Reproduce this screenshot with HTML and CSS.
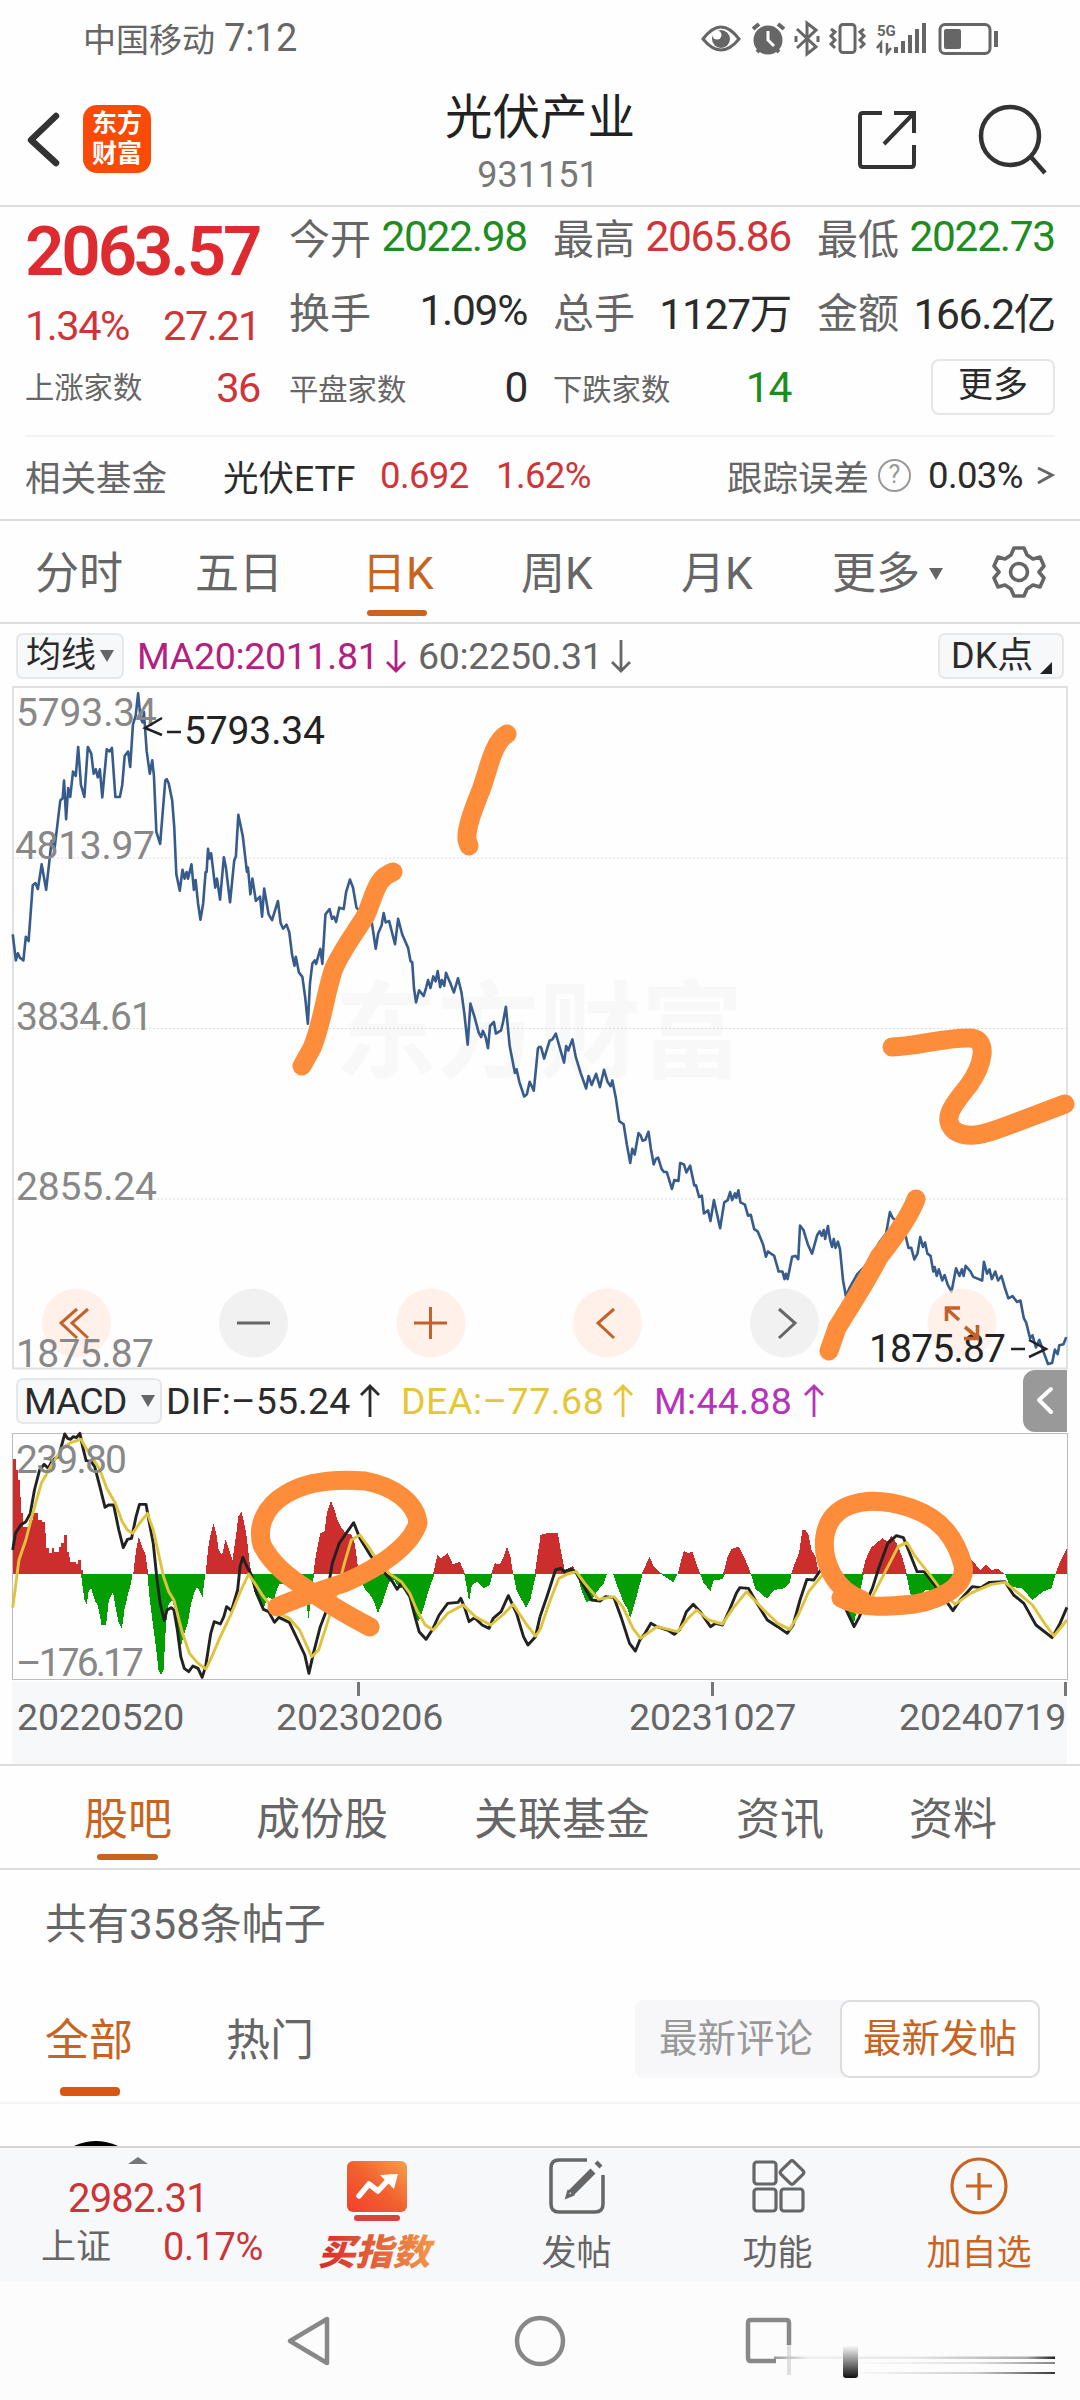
FILE: index.html
```html
<!DOCTYPE html>
<html lang="zh-CN">
<head>
<meta charset="utf-8">
<title>光伏产业 931151</title>
<link rel="stylesheet" href="styles.css">
</head>
<body>
<main class="app">
  <div class="status">
    <span class="carrier">中国移动</span><span class="clock">7:12</span>
    <svg class="status-icons" width="300" height="40" viewBox="700 16 300 40" fill="none" stroke="#666" stroke-width="3">
      <path d="M703 37q18-24 36 0q-18 22-36 0z"/><circle cx="721" cy="37" r="9" fill="#666" stroke="none"/><circle cx="717" cy="33" r="4.5" fill="#fefefe" stroke="none"/>
      <circle cx="768" cy="38" r="14.5" fill="#666" stroke="none"/><path d="M768 29v9l6 6" stroke="#fefefe"/><path d="M753 27l6-5M784 27l-6-5M757 50l4-4M779 50l-4-4" stroke-width="4"/>
      <path d="M797 27l19 18-9 7V21l9 7-19 18M796 34v6M818 34v6"/>
      <rect x="840" y="22.500" width="15" height="28" rx="3"/><path d="M831 27l4 3-4 4 4 4-4 4 4 4M864 27l-4 3 4 4-4 4 4 4-4 4"/>
      <text x="877" y="34" class="tiny">5G</text><path d="M881 51V41l-4 5M887 41v10l4-5" stroke-width="2.500"/><path d="M896 51v-6M903 51v-12M910 51V33M917 51V27M924 51V21" stroke-width="4"/>
      <rect x="940" y="22.500" width="50" height="29" rx="5"/><rect x="944" y="27" width="17" height="20" rx="2" fill="#666" stroke="none"/><path d="M996 29v16" stroke-width="4"/>
    </svg>
  </div>
  <header class="header">
    <svg class="back" width="36" height="60" viewBox="0 0 36 60" fill="none" stroke="#333" stroke-width="6.500" stroke-linecap="round" stroke-linejoin="round"><path d="M30 6L5 30L30 53"/></svg>
    <div class="logo"><span>东方</span><span>财富</span></div>
    <div class="title"><h1>光伏产业</h1><p>931151</p></div>
    <svg class="share" width="60" height="60" viewBox="0 0 60 60" fill="none" stroke="#333" stroke-width="4"><path d="M25 3H6q-3 0-3 3v48q0 3 3 3h48q3 0 3-3V35M37 3h20v20M57 3L27 34"/></svg>
    <svg class="search" width="70" height="70" viewBox="0 0 70 70" fill="none" stroke="#333" stroke-width="4.500"><circle cx="33" cy="34" r="29"/><path d="M54 55l14 16"/></svg>
  </header>
  <section class="quote">
    <div class="quote-main">
      <strong class="price">2063.57</strong>
      <div class="pair red num"><span>1.34%</span><span>27.21</span></div>
      <div class="pair"><span class="small gray">上涨家数</span><span class="num red">36</span></div>
    </div>
    <dl class="stats">
      <div><dt>今开</dt><dd class="green">2022.98</dd></div><div><dt>最高</dt><dd class="red">2065.86</dd></div><div><dt>最低</dt><dd class="green">2022.73</dd></div>
      <div><dt>换手</dt><dd>1.09%</dd></div><div><dt>总手</dt><dd>1127万</dd></div><div><dt>金额</dt><dd>166.2亿</dd></div>
      <div><dt class="small">平盘家数</dt><dd>0</dd></div><div><dt class="small">下跌家数</dt><dd class="green">14</dd></div><div class="more-cell"><button class="more">更多</button></div>
    </dl>
  </section>
  <section class="fund">
    <span class="gray">相关基金</span><span>光伏ETF</span><span class="red num">0.692</span><span class="red num">1.62%</span><span class="gray">跟踪误差</span><span class="help">?</span><span class="num">0.03%</span>
    <svg width="18" height="20" viewBox="0 0 18 20" fill="none" stroke="#666" stroke-width="3"><path d="M1 2l14 7-14 8"/></svg>
  </section>
  <nav class="periods">
    <span>分时</span><span>五日</span><span class="active">日K</span><span>周K</span><span>月K</span><span>更多<i class="caret"></i></span>
    <svg width="54" height="54" viewBox="-27 -27 54 54" fill="none" stroke="#666" stroke-width="3.600" stroke-linejoin="round"><path d="M-5-24H5L8-17L14-13L21-15L25-6L20 0L25 6L21 15L14 13L8 17L5 24H-5L-8 17L-14 13L-21 15L-25 6L-20 0L-25-6L-21-15L-14-13L-8-17Z"/><circle r="8.500"/></svg>
  </nav>
  <div class="indicator ma">
    <span class="chip">均线<i class="caret"></i></span><span class="magenta v-ma">MA20:2011.81</span><svg class="arr magenta"><use href="#down"/></svg><span class="gray v-60">60:2250.31</span><svg class="arr gray"><use href="#down"/></svg><span class="chip dk">DK点<i></i></span>
  </div>
  <svg class="defs" width="0" height="0"><defs>
    <g id="down" fill="none" stroke="currentColor" stroke-width="2.800"><path d="M10 1v31M1 23l9 9 9-9"/></g>
    <g id="up" fill="none" stroke="currentColor" stroke-width="2.800"><path d="M10 33V2M1 11l9-9 9 9"/></g>
    <linearGradient id="warm" x1="0" y1="1" x2="1" y2="0"><stop offset="0" stop-color="#f23f2d"/><stop offset=".5" stop-color="#f2602f"/><stop offset="1" stop-color="#f4a04c"/></linearGradient>
    <linearGradient id="warmh"><stop offset="0" stop-color="#d62a2a"/><stop offset="1" stop-color="#f19a4a"/></linearGradient>
    <linearGradient id="shade" x1="0" y1="0" x2="0" y2="1"><stop offset="0" stop-color="#fff"/><stop offset=".5" stop-color="#888"/><stop offset="1" stop-color="#111"/></linearGradient>
    <linearGradient id="streak"><stop offset="0" stop-color="#999"/><stop offset=".12" stop-color="#f0f0f0"/><stop offset=".5" stop-color="#e6e6e6"/><stop offset=".9" stop-color="#aaa"/><stop offset="1" stop-color="#222"/></linearGradient>
    <linearGradient id="fade"><stop offset="0" stop-color="#888" stop-opacity="0"/><stop offset=".6" stop-color="#888" stop-opacity=".4"/><stop offset="1" stop-color="#333"/></linearGradient>
  </defs></svg>
  <svg class="chart" width="1080" height="690" viewBox="0 680 1080 690">
    <text class="watermark" x="335" y="1069" textLength="408" lengthAdjust="spacingAndGlyphs">东方财富</text>
    <path d="M13 687H1067V1368.500H13Z" fill="none" stroke="#dfe0e0" stroke-width="2"/>
    <path d="M13 858H1067M13 1028.500H1067M13 1199H1067" stroke="#ddd" stroke-dasharray="2 2"/>
    <g class="line price-line">
      <polyline transform="translate(0 680) scale(.34439 .44643)" points="37,570 46,628 52,612 58,622 68,628 75,575 83,585 95,460 103,455 110,468 121,413 134,470 150,360 158,380 175,270 182,265 186,225 192,312 198,242 204,262 212,205 220,215 227,150 235,235 245,262 255,150 265,165 272,210 278,200 284,218 290,200 297,263 310,155 318,160 325,152 335,262 348,262 355,235 362,170 372,160 378,195 386,100 394,80 401,30 408,85 414,95 418,72 426,160 435,210 442,180 447,215 454,340 465,367 480,225 484,222 490,232 500,270 506,330 512,435 522,472 530,425 536,445 542,430 546,445 556,413 563,470 568,448 575,500 582,537 590,500 597,430 600,430 604,378 608,400 613,388 625,465 630,445 639,492 650,397 656,420 668,498 680,405 685,395 692,302 705,350 717,430 720,420 727,480 733,445 743,495 755,485 761,530 767,467 780,525 790,538 807,495 815,545 822,557 832,548 840,565 848,615 855,640 859,620 868,655 878,665 886,710 894,770 900,680 907,635 914,628 918,636 930,602 936,636 945,525 957,513 964,535 970,530 976,542 985,510 998,513 1005,475 1016,447 1025,465 1035,510 1060,530 1080,545 1091,602 1098,568 1108,550 1114,522 1120,543 1130,540 1147,592 1156,535 1168,570 1185,600 1192,630 1197,632 1202,690 1208,722 1217,695 1230,708 1237,690 1243,672 1250,690 1258,664 1265,675 1271,652 1278,688 1283,672 1290,685 1295,656 1308,680 1318,700 1330,668 1340,700 1348,745 1358,817 1366,725 1378,755 1390,790 1397,800 1402,786 1410,800 1417,825 1423,775 1434,766 1440,792 1455,785 1461,765 1469,732 1480,820 1495,880 1500,872 1508,900 1522,933 1530,928 1538,900 1550,920 1557,865 1562,825 1568,820"/>
      <polyline transform="translate(540 680) scale(.34439 .44643)" points="0,820 4,825 12,848 28,808 36,805 46,792 58,825 70,857 76,820 82,830 94,805 104,845 118,880 134,915 141,887 150,907 163,882 174,912 186,873 196,900 205,910 210,897 220,935 230,988 243,995 252,1040 262,1082 268,1050 275,1063 286,1015 292,1020 298,1032 306,1030 315,1012 322,1050 330,1085 337,1072 343,1070 353,1095 360,1102 368,1102 383,1140 390,1120 402,1122 407,1082 418,1085 425,1103 436,1088 448,1132 453,1132 462,1158 470,1155 476,1195 488,1188 495,1212 505,1165 523,1228 535,1170 545,1165 552,1147 558,1165 566,1150 570,1160 576,1143 582,1170 595,1175 604,1200 612,1198 622,1230 632,1235 648,1265 656,1292 662,1280 680,1290 693,1325 704,1325 710,1342 714,1330 719,1342 732,1292 742,1290 750,1297 755,1222 765,1232 778,1265 790,1285 805,1243 812,1235 818,1245 824,1232 828,1252 836,1223 842,1253 848,1270 853,1252 858,1272 865,1258 871,1275 880,1345 888,1380 900,1360 922,1330 925,1328 960,1300 985,1260 1005,1240 1016,1192 1024,1205 1040,1215 1060,1240 1070,1272 1078,1272 1087,1298 1096,1285 1104,1248 1112,1270 1118,1260 1125,1285 1134,1290 1142,1325 1146,1315 1152,1335 1158,1320 1168,1345 1175,1333 1184,1355 1195,1370 1208,1318 1218,1335 1225,1320 1230,1335 1236,1312 1250,1325 1258,1337 1284,1345 1289,1303 1298,1330 1305,1320 1312,1342 1322,1325 1330,1345 1340,1335 1350,1362 1360,1385 1372,1380 1385,1393 1395,1390 1405,1430 1412,1440 1423,1475 1430,1468 1440,1495 1450,1478 1462,1505 1475,1532 1487,1530 1495,1500 1503,1510 1508,1490 1520,1488 1528,1472"/>
    </g>
    <g fill="#ffe9de" fill-opacity=".65"><circle cx="76.500" cy="1323" r="34.500"/><circle cx="431" cy="1323" r="34.500"/><circle cx="607.500" cy="1323" r="34.500"/><circle cx="962" cy="1323" r="34.500"/></g>
    <g fill="#eee" fill-opacity=".8"><circle cx="253.500" cy="1323" r="34.500"/><circle cx="784.500" cy="1323" r="34.500"/></g>
    <g class="axis-label">
      <text x="16" y="726" textLength="141">5793.34</text><text x="15" y="859" textLength="140">4813.97</text><text x="16" y="1030" textLength="137">3834.61</text><text x="16" y="1200" textLength="141">2855.24</text><text x="16" y="1367" textLength="138">1875.87</text>
    </g>
    <g class="peak"><text x="184" y="744" textLength="141">5793.34</text><text x="869" y="1362" textLength="137">1875.87</text><path d="M162 718l-17 10 17 7M167 732h14M1011 1349h14M1029 1340l17 9-17 8" fill="none" stroke="#222" stroke-width="2.500"/></g>
    <g fill="none" stroke="#c2622a" stroke-width="3"><path d="M77 1309L61 1323L77 1338M88 1309L72 1323L88 1338M414 1323H447M430.500 1307V1339M614 1309L598 1323L614 1338"/><path d="M960 1308H946.500V1321M947 1309L959 1320M965 1327L977 1337M964 1338.500H977.500V1325" stroke-width="3.600"/><path d="M237 1323H270M779 1309L795 1323L779 1338" stroke="#666"/></g>
  </svg>
  <div class="indicator macd">
    <span class="chip">MACD<i class="caret"></i></span><span class="v-dif">DIF:–55.24</span><svg class="arr"><use href="#up"/></svg><span class="yellow v-dea">DEA:–77.68</span><svg class="arr yellow"><use href="#up"/></svg><span class="purple v-m">M:44.88</span><svg class="arr purple"><use href="#up"/></svg>
    <span class="drawer"><svg width="18" height="32" viewBox="0 0 18 32" fill="none" stroke="#fff" stroke-width="4" stroke-linecap="round" stroke-linejoin="round"><path d="M15 4L3 15L15 27"/></svg></span>
  </div>
  <svg class="chart" width="1080" height="250" viewBox="0 1432 1080 250">
    <g id="bars" shape-rendering="crispEdges">
      <g transform="translate(0 1370) scale(.34439 .33333)">
        <path fill="#cb2e2c" d="M37 611V268H46V300H52V330H57V380H62V430H68V470H85V450H97V430H110V450H122V457H130V490H135V535H141V550H150V533H157V545H170V530H178V518H185V495H194V545H200V560H204V577H222V583H227V570H234V600H240V611ZM387 611L395 540L403 500L412 530L422 550L430 611ZM597 611L605 530L612 490L620 462L628 490L635 540L645 555L655 508L665 540L675 570L685 500L692 440L701 425L708 455L715 490L725 580L730 611ZM910 611L918 550L930 490L942 485L950 425L961 393L970 415L980 450L992 475L1005 490L1020 492L1030 520L1042 611ZM1258 611L1270 555L1280 565L1300 550L1315 583L1335 575L1350 611ZM1427 611L1437 580L1452 583L1463 560L1472 530L1482 560L1490 611ZM1553 611L1560 560L1568 510V611Z"/>
        <path fill="#049e04" d="M235 611L245 690L252 702L258 660L265 655L275 690L285 710L295 765L308 765L316 690L328 665L335 710L345 760L354 775L362 715L370 680L380 640L385 611ZM428 611L435 690L445 770L455 850L460 900L467 915L475 900L482 760L490 700L500 690L508 720L515 770L525 830L535 790L545 760L555 700L565 665L572 650L580 665L588 680L596 611ZM725 611L740 670L752 690L765 715L778 680L795 690L805 655L812 640L850 650L885 640L890 700L896 745L903 690L912 611ZM1045 611L1058 655L1075 675L1088 700L1097 730L1110 700L1122 660L1130 635L1145 630L1160 655L1175 650L1195 690L1205 740L1215 755L1228 720L1245 660L1262 611ZM1348 611L1355 650L1362 695L1370 645L1385 635L1405 655L1422 645L1430 611ZM1490 611L1500 660L1515 690L1527 713L1540 690L1550 640L1558 611Z"/>
      </g>
      <g transform="translate(540 1370) scale(.34439 .33333)">
        <path fill="#cb2e2c" d="M0 611V495L20 490H52L60 540L72 600L95 588L105 605L115 611ZM296 611L305 590L318 560L330 590L345 605L355 611ZM400 611L410 570L418 543L432 550L442 545L452 575L465 611ZM532 611L545 560L555 538L577 530L590 555L605 590L612 611ZM730 611L740 580L752 550L762 480H770L780 495L788 540L800 560L810 611ZM935 611L945 570L960 535L975 520L995 505L1010 515L1020 497L1035 520L1050 555L1065 611ZM1240 611L1250 565L1270 590L1280 600L1295 583L1310 600L1330 597L1348 611ZM1497 611L1510 575L1530 535V611Z"/>
        <path fill="#049e04" d="M108 611L120 660L135 697L150 690L165 665L185 640L195 611ZM212 611L225 650L240 690L255 720L262 745L275 700L288 650L298 611ZM350 611L370 625L388 637L400 611ZM465 611L475 640L495 662L505 630L530 628L537 611ZM612 611L625 655L645 675L660 685L680 660L710 655L725 640L730 611ZM860 611L885 700L910 770L925 690L940 611ZM1063 611L1075 670L1090 685L1120 660L1150 665L1180 660L1210 640L1240 611ZM1350 611L1365 650L1400 655L1430 690L1460 665L1485 655L1498 611Z"/>
      </g>
    </g>
    <path d="M12.500 1433.500H1067.500V1679.500H12.500Z" fill="none" stroke="#bbb"/>
    <g class="line dif">
      <polyline transform="translate(0 1370) scale(.34439 .33333)" points="37,540 45,490 60,465 75,455 88,430 100,360 115,300 128,283 140,295 150,275 160,265 170,260 188,192 196,205 205,208 213,200 222,203 232,190 240,230 250,272 265,275 275,290 290,350 305,412 315,405 330,405 345,480 358,533 370,508 382,505 395,440 405,403 424,403 432,450 445,520 455,620 465,700 477,752 485,720 497,713 505,720 515,780 525,860 535,895 548,905 560,888 575,895 587,922 597,890 612,790 622,755 640,762 650,740 658,710 672,722 690,660 697,590 705,562 715,585 730,615 745,670 765,718 780,725 797,757 810,742 840,757 860,800 885,855 897,910 910,850 930,770 945,730 955,640 965,580 985,520 1005,490 1027,458 1045,505 1078,560 1110,600 1140,635 1153,658 1165,640 1190,680 1205,740 1217,785 1237,808 1255,780 1275,735 1300,700 1330,697 1338,685 1350,715 1362,755 1378,743 1400,765 1420,775 1432,745 1455,725 1476,677 1500,730 1520,800 1533,825 1555,800 1568,740"/>
      <polyline transform="translate(540 1370) scale(.34439 .33333)" points="0,740 20,680 45,600 60,595 70,605 90,598 105,608 120,635 150,690 175,693 190,680 215,683 235,740 260,820 277,843 290,810 305,790 322,760 340,770 370,780 390,793 405,780 425,725 445,703 465,725 495,770 510,760 530,765 550,720 570,670 580,653 605,655 630,700 660,750 690,770 718,790 735,765 755,690 775,628 795,630 815,600 840,620 880,700 912,770 925,745 945,700 965,655 985,590 1010,520 1035,497 1055,503 1070,540 1095,605 1115,605 1150,650 1199,722 1220,690 1255,650 1280,653 1305,637 1350,635 1375,675 1405,700 1440,765 1487,803 1510,760 1530,712"/>
    </g>
    <g class="line dea">
      <polyline transform="translate(0 1370) scale(.34439 .33333)" points="37,713 55,570 75,510 95,430 120,340 150,285 180,235 205,218 235,208 250,235 270,265 290,300 310,355 335,400 355,455 370,480 385,490 405,460 428,430 445,480 460,550 475,620 490,665 505,690 515,730 530,790 550,850 575,880 598,897 615,860 640,800 670,735 700,660 722,612 740,640 765,680 800,725 840,745 870,780 905,860 925,840 950,760 975,680 1000,580 1020,510 1045,495 1070,530 1095,570 1130,610 1165,635 1190,670 1210,720 1235,765 1258,780 1300,730 1345,705 1380,740 1425,765 1460,735 1490,703 1530,765 1555,798 1568,780"/>
      <polyline transform="translate(540 1370) scale(.34439 .33333)" points="0,780 30,690 55,625 80,612 105,605 130,640 170,688 215,680 240,710 270,775 292,805 340,770 400,785 430,745 455,720 490,750 530,762 560,715 600,665 650,720 690,760 725,778 750,735 780,665 820,615 870,640 920,730 960,690 1000,610 1040,530 1065,517 1090,560 1125,605 1165,660 1205,703 1250,670 1310,643 1350,637 1390,670 1430,705 1465,760 1492,798 1530,750"/>
    </g>
    <g class="axis-label"><text x="16" y="1473" textLength="111">239.80</text><text x="16" y="1676" textLength="128">–176.17</text></g>
  </svg>
  <div class="dates"><span>20220520</span><span>20230206</span><span>20231027</span><span>20240719</span></div>
  <nav class="sections"><span class="active">股吧</span><span>成份股</span><span>关联基金</span><span>资讯</span><span>资料</span></nav>
  <section class="posts">
    <p class="count">共有358条帖子</p>
    <div class="filters"><span class="active">全部</span><span>热门</span><div class="sort"><span>最新评论</span><span class="on">最新发帖</span></div></div>
    <div class="feed"><div class="avatar"></div></div>
  </section>
  <footer class="toolbar">
    <div class="index"><i class="up-mark"></i><b>2982.31</b><div><span>上证</span><em>0.17%</em></div></div>
    <div class="tool"><svg width="64" height="68" viewBox="0 0 64 68"><rect x="2" y="6" width="60" height="51" rx="6" fill="url(#warm)"/><rect x="9" y="60" width="46" height="6" rx="3" fill="#d9443a"/><path d="M14 41L24 29L33 36L46 22" fill="none" stroke="#fff" stroke-width="5.500" stroke-linecap="round" stroke-linejoin="round"/><path d="M35 20L53 19L49 34Z" fill="#fff"/></svg>
      <svg class="buy" width="122" height="44" viewBox="0 0 122 44"><text x="2" y="33" textLength="112" lengthAdjust="spacingAndGlyphs" fill="url(#warmh)">买指数</text></svg></div>
    <div class="tool"><svg width="64" height="68" viewBox="0 0 64 68" fill="none" stroke="#666" stroke-width="3.500"><path d="M42 5H14q-8 0-8 8v36q0 8 8 8h36q8 0 8-8V20"/><path d="M26 38L48 16" stroke-width="7"/><path d="M24 35l-2 7 7-3" stroke-width="3"/><path d="M52 11l3-3" stroke-width="7"/></svg><span>发帖</span></div>
    <div class="tool"><svg width="64" height="68" viewBox="0 0 64 68" fill="none" stroke="#666" stroke-width="3.200"><rect x="8" y="7" width="22" height="22" rx="3"/><rect x="8" y="34" width="22" height="22" rx="3"/><rect x="35" y="34" width="22" height="22" rx="3"/><rect x="37" y="8.500" width="18" height="18" rx="2.500" transform="rotate(45 46 17.500)"/></svg><span>功能</span></div>
    <div class="tool orange"><svg width="64" height="68" viewBox="0 0 64 68" fill="none" stroke="#c8641f" stroke-width="3.200"><circle cx="32" cy="31" r="27"/><path d="M19 31H45M32 18V45"/></svg><span>加自选</span></div>
  </footer>
  <div class="system">
    <svg width="1080" height="118" viewBox="0 2282 1080 118" fill="none" stroke="#888" stroke-width="4.500" stroke-linejoin="round"><path d="M290 2341L327 2319V2363Z"/><circle cx="540" cy="2341" r="23"/><path d="M776 2361H751q-3 0-3-3V2323q0-3 3-3H786q3 0 3 3V2345"/>
      <g stroke="none"><rect x="774" y="2356.500" width="281" height="2.500" fill="url(#streak)"/><rect x="850" y="2362" width="205" height="2" fill="url(#fade)" opacity=".6"/><rect x="850" y="2372" width="205" height="2" fill="url(#fade)"/><rect x="787" y="2345" width="4" height="30" fill="#ccc" opacity=".6"/><rect x="843" y="2345" width="15" height="33" rx="3" fill="url(#shade)"/></g></svg>
  </div>
  <svg class="ink" width="1080" height="1000" viewBox="0 680 1080 1000">
    <path d="M507 734C493 742 489 768 481 790C473 810 466 828 467 840L469 846"/>
    <path d="M393 872C376 878 375 894 366 915C358 929 344 946 334 968C326 990 322 1025 312 1048L302 1066"/>
    <path d="M892 1047C920 1046 945 1037 971 1038C989 1040 983 1065 969 1085C955 1103 940 1118 955 1131C972 1141 992 1131 1012 1124L1065 1104"/>
    <path d="M916 1199C910 1216 894 1238 879 1257C867 1281 849 1308 837 1328L829 1351"/>
    <path d="M277 1607C300 1597 322 1590 344 1583C379 1568 411 1546 418 1523C416 1503 394 1486 365 1481C340 1479 309 1480 286 1494C264 1507 257 1527 262 1545C272 1565 291 1579 310 1591C328 1604 351 1617 370 1627"/>
    <path d="M841 1598C862 1610 895 1606 915 1604C942 1599 967 1586 963 1565C956 1540 943 1519 911 1508C890 1501 867 1498 848 1506C820 1518 820 1551 832 1574C839 1587 851 1596 862 1600"/>
  </svg>
</main>
</body>
</html>
```
FILE: styles.css
```css
* { box-sizing: border-box; }
body { margin: 0; background: #fefefe; color: #2b2b2b; font-family: Roboto, "Noto Sans CJK SC", sans-serif; }
h1, p, dl, dd, dt { margin: 0; font-weight: 400; }
.app { position: relative; width: 1080px; height: 2400px; overflow: hidden; }
.app svg { display: block; flex: none; overflow: visible; }
.app .defs { position: absolute; }
span { white-space: nowrap; }
.red { color: #d03438; }
.green { color: #1f8c1f; }
.gray { color: #666; }
.magenta { color: #b3207f; }
.yellow { color: #e5c639; }
.purple { color: #b535b9; }
.orange, .active { color: #c8641f; }
.num { letter-spacing: -.035em; }
.caret { display: inline-block; border: 7px solid transparent; border-top: 12px solid #666; border-bottom: 0; }

.status { display: flex; align-items: center; height: 75px; padding-left: 83px; color: #666; font-size: 33px; }
.clock { margin-left: 9px; font-size: 38px; }
.status-icons { margin-left: auto; margin-right: 80px; }
.tiny { font-size: 15px; font-weight: 700; fill: #666; stroke: none; }

.header { display: grid; grid-template-columns: 57px 74px 1fr 60px 60px 70px; height: 132px; padding: 1px 33px 0 26px; border-bottom: 2px solid #ddd; }
.back { margin-top: 34px; }
.logo { display: grid; align-content: center; width: 68px; height: 68px; margin-top: 29px; border-radius: 14px; background: #f94a08; color: #fff; text-align: center; font-size: 25px; font-weight: 700; line-height: 30px; }
.title { text-align: center; padding-left: 66px; }
.title h1 { margin-top: 11px; font-size: 47.500px; line-height: 62px; color: #222; }
.title p { font-size: 36px; line-height: 42px; margin-top: 5px; padding-right: 4px; color: #777; }
.share { margin-top: 34px; }
.search { grid-column: 6; margin-top: 26px; }

.quote { display: flex; height: 228px; padding: 6px 24px 0 25px; }
.quote-main { width: 264px; padding-right: 27px; }
.price { display: block; height: 73px; padding-top: 3px; line-height: 72px; font-size: 69px; letter-spacing: -3.100px; color: #dd2b30; font-weight: 600; }
.pair { display: flex; justify-content: space-between; font-size: 41.500px; line-height: 64px; height: 64px; padding-right: 2px; }
.pair:nth-child(2) { padding-top: 8px; margin-bottom: 6px; }
.small { font-size: 29.300px !important; }
.stats { display: grid; grid-template-columns: 264px 264px 238px; grid-template-rows: 48px 100px 54px; flex: 1; margin-top: -1px; align-content: start; }
.stats > div { display: flex; justify-content: space-between; align-items: center; width: 238px; font-size: 42.500px; letter-spacing: -.03em; }
.stats dt { color: #666; font-size: 41px; letter-spacing: 0; }
.stats .more-cell { justify-content: flex-end; }
.more { width: 124px; height: 56px; padding: 0 0 5px; background: #fefefe; border: 2px solid #e6e6e6; border-radius: 8px; color: #2b2b2b; font: 35px/50px Roboto, "Noto Sans CJK SC", sans-serif; }

.fund { display: grid; grid-template-columns: 198px 157px 116px 231px 151px 50px 109px 18px; align-items: center; height: 84px; margin: 0 25px; padding-bottom: 5px; border-top: 2px solid #f3f3f3; font-size: 35.500px; }
.fund .num { font-size: 36.500px; letter-spacing: -.6px; }
.help { width: 33px; height: 33px; border: 2.500px solid #999; border-radius: 50%; color: #999; font-size: 25px; line-height: 28px; text-align: center; }

.periods { display: grid; grid-template-columns: 160px 167px 159px 160px 151px 160px 60px; align-items: center; height: 105px; padding-left: 35px; border-top: 2px solid #ddd; border-bottom: 2px solid #ddd; color: #666; font-size: 44px; }
.periods span { position: relative; top: 2px; line-height: 60px; }
.periods .active { color: #c8641f; }
.periods .caret { margin: 0 0 9px 9px; }
.periods .active::after { content: ""; position: absolute; left: 5px; bottom: -12px; width: 60px; height: 6px; border-radius: 3px; background: #c8641f; }

.indicator { display: flex; align-items: center; font-size: 37.500px; line-height: 44px; }
.chip { display: flex; align-items: center; height: 46px; border: 2px solid #e6e7e8; border-radius: 7px; background: #f7f8fa; }
.ma { height: 56px; padding: 7px 16px 0; }
.ma .chip { width: 108px; padding-left: 8px; font-size: 35px; }
.ma .chip .caret { margin-left: 4px; }
.v-ma { width: 262px; padding-left: 13px; letter-spacing: -.3px; }
.v-60 { width: 205px; padding-left: 12px; letter-spacing: -.3px; }
.arr { width: 20px; height: 34px; }
.ma .dk { width: 126px; margin-left: auto; padding-left: 11px; font-size: 36px; }
.dk i { margin: 24px 0 0 7px; border-left: 12px solid transparent; border-bottom: 12px solid #222; }
.chart { width: 1080px; }
.line { fill: none; stroke-linejoin: round; }
.line polyline { vector-effect: non-scaling-stroke; stroke-width: 2.900px; }
.price-line polyline { stroke: #365b8c; stroke-width: 2.600px; }
.dif { stroke: #222; }
.dea { stroke: #e0c33c; }
.axis-label { font-size: 39px; fill: #888; }
.peak { font-size: 39px; fill: #222; }
.watermark { font-size: 105px; font-weight: 700; fill: #f8f8f8; }

.macd { height: 62px; padding: 0 13px 0 16px; }
.macd .chip { width: 146px; height: 46px; padding-left: 6px; letter-spacing: -1px; }
.macd .chip .caret { margin-left: 15px; }
.v-dif { width: 198px; padding-left: 4px; letter-spacing: .1px; }
.v-dea { width: 233px; padding-left: 21px; letter-spacing: .5px; }
.v-m { width: 171px; padding-left: 21px; letter-spacing: .3px; }
.drawer { display: grid; place-items: center; width: 44px; height: 62px; margin-left: auto; border-radius: 12px 0 0 12px; background: #999; }

.dates { display: grid; grid-template-columns: 259px 353px 270px 173px; align-items: center; height: 82px; margin: 0 13px 0 12px; padding: 7px 0 19px 5px; background: #f7f8fa; background-image: linear-gradient(#777, #777), linear-gradient(#777, #777), linear-gradient(#777, #777); background-size: 3px 14px; background-repeat: no-repeat; background-position: 345px 0, 699px 0, 1052px 0; color: #666; font-size: 37.500px; letter-spacing: -.2px; line-height: 50px; }

.sections { display: grid; grid-template-columns: 172px 218px 262px 173px 100px; align-items: center; height: 106px; padding: 5px 0 0 84px; border-top: 2px solid #ddd; border-bottom: 2px solid #ddd; color: #666; font-size: 44px; }
.sections span { position: relative; line-height: 60px; }
.sections .active { color: #c8641f; }
.sections .active::after { content: ""; position: absolute; left: 13px; bottom: -10px; width: 61px; height: 6px; border-radius: 3px; background: #c8641f; }
.count { height: 110px; padding: 3px 0 0 45px; color: #666; font-size: 42px; line-height: 104px; }
.filters { display: flex; align-items: center; height: 124px; padding: 0 40px 5px 45px; border-bottom: 2px solid #f5f5f5; color: #666; font-size: 44px; }
.filters > span { position: relative; top: 2px; width: 181px; line-height: 60px; }
.filters .active::after { content: ""; position: absolute; left: 15px; bottom: -25px; width: 60px; height: 9px; border-radius: 4px; background: #db570f; }
.sort { display: flex; margin-left: auto; width: 405px; height: 78px; border-radius: 8px; background: #f7f7fa; font-size: 38.500px; line-height: 77px; color: #999; }
.sort span { width: 205px; padding-left: 24px; }
.sort .on { width: 200px; padding-left: 21px; border: 2px solid #ddd; border-radius: 10px; background: #fefefe; color: #c8641f; line-height: 74px; }
.feed { height: 42px; padding: 37px 0 0 46px; overflow: hidden; }
.avatar { width: 100px; height: 100px; border-radius: 50%; background: #000; }

.toolbar { display: grid; grid-template-columns: 276px 201px 199px 203px 200px; height: 137px; border-top: 2px solid #d5d5d5; background: #f7f8fa; color: #666; }
.index { padding: 9px 0 0 41px; }
.up-mark { display: block; width: 0; margin-left: 87px; border: 10px solid transparent; border-bottom: 7px solid #777; border-top: 0; }
.index b { display: block; margin: 11px 0 0 27px; color: #cc3438; font-size: 40px; line-height: 48px; font-weight: 400; letter-spacing: -.8px; }
.index div { display: flex; justify-content: space-between; width: 222px; font-size: 35px; line-height: 49px; }
.index em { color: #cc3438; font-style: normal; font-size: 38px; letter-spacing: -.4px; }
.tool { display: flex; flex-direction: column; align-items: center; padding-top: 7px; font-size: 35px; line-height: 44px; }
.tool > svg:first-child { margin-bottom: 9px; }
.orange { color: #c8641f; }
.buy text { font: italic 900 36px "Noto Sans CJK SC", sans-serif; }
.system { height: 119px; background: #fcfcfc; }
.system svg { margin-top: -1px; }
.ink { position: absolute; left: 0; top: 680px; fill: none; stroke: #fd8d3a; stroke-width: 19px; stroke-linecap: round; stroke-linejoin: round; }
```
